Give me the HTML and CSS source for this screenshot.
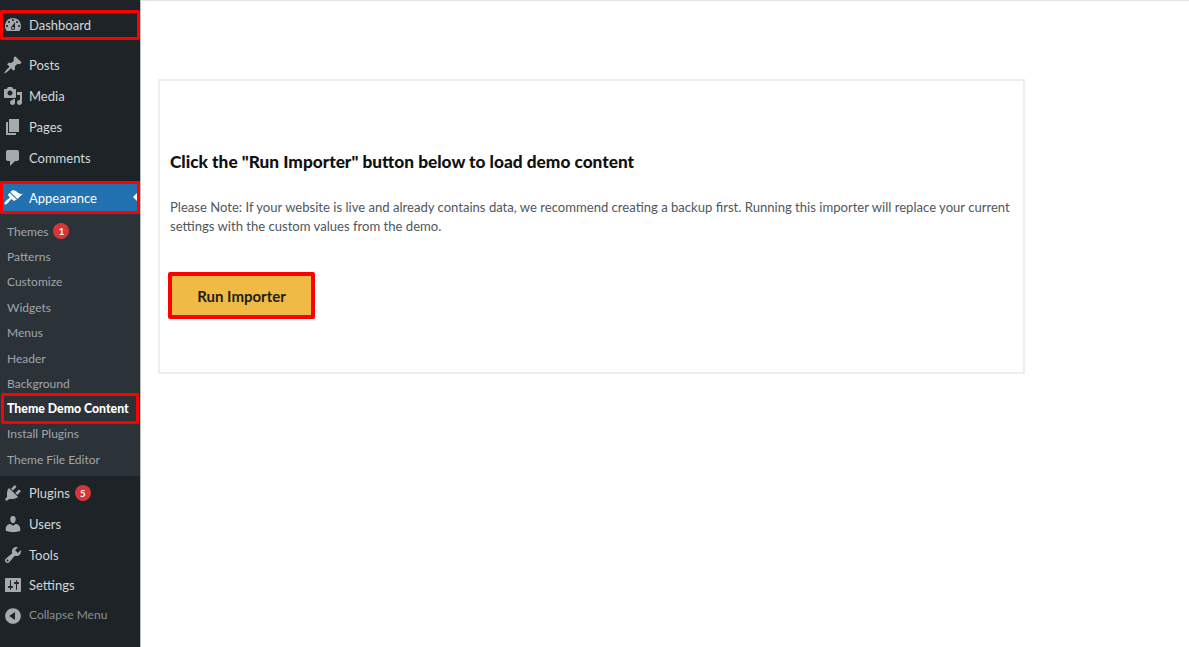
FILE: index.html
```html
<!DOCTYPE html>
<html lang="en">
<head>
<meta charset="utf-8">
<title>Theme Demo Content</title>
<link rel="stylesheet" href="styles.css">
</head>
<body>
<div class="layout">
  <nav class="sidebar">
    <a class="item item-dash marked"><svg class="icon" viewBox="0 0 20 20"><path fill-rule="evenodd" d="M3.76 16h12.48c1.1-1.37 1.76-3.11 1.76-5 0-4.42-3.58-8-8-8s-8 3.58-8 8c0 1.89.66 3.63 1.76 5zM10 4c.55 0 1 .45 1 1s-.45 1-1 1-1-.45-1-1 .45-1 1-1zM6 6c.55 0 1 .45 1 1s-.45 1-1 1-1-.45-1-1 .45-1 1-1zm8 0c.55 0 1 .45 1 1s-.45 1-1 1-1-.45-1-1 .45-1 1-1zm-5.37 5.55L12 7v6c0 1.1-.9 2-2 2s-2-.9-2-2c0-.57.24-1.08.63-1.45zM4 10c.55 0 1 .45 1 1s-.45 1-1 1-1-.45-1-1 .45-1 1-1zm12 0c.55 0 1 .45 1 1s-.45 1-1 1-1-.45-1-1 .45-1 1-1zm-5 3c0-.55-.45-1-1-1s-1 .45-1 1 .45 1 1 1 1-.45 1-1z"/></svg><span>Dashboard</span></a>
    <div class="group group-content">
      <a class="item"><svg class="icon" viewBox="0 0 20 20"><path d="M10.44 3.02l1.82-1.82 6.36 6.35-1.83 1.82c-1.05-.68-2.48-.57-3.41.36l-.75.75c-.92.93-1.04 2.35-.35 3.41l-1.83 1.82-2.41-2.41-2.8 2.79c-.42.42-3.38 2.71-3.8 2.29s1.86-3.39 2.28-3.81l2.79-2.79L4.1 9.36l1.83-1.82c1.05.69 2.48.57 3.4-.36l.75-.75c.93-.92 1.05-2.35.36-3.41z"/></svg><span>Posts</span></a>
      <a class="item"><svg class="icon" viewBox="0 0 20 20"><path fill-rule="evenodd" d="M13 11V4c0-.55-.45-1-1-1h-1.67L9 1H5L3.67 3H2c-.55 0-1 .45-1 1v7c0 .55.45 1 1 1h10c.55 0 1-.45 1-1zM7 4.5c1.38 0 2.5 1.12 2.5 2.5S8.38 9.5 7 9.5 4.5 8.38 4.5 7 5.62 4.5 7 4.5zM14 6h5v10.5c0 1.38-1.12 2.5-2.5 2.5S14 17.88 14 16.5s1.12-2.5 2.5-2.5c.17 0 .34.02.5.05V9h-3V6zm-4 8.05V13h2v3.5c0 1.38-1.12 2.5-2.5 2.5S7 17.88 7 16.5 8.12 14 9.5 14c.17 0 .34.02.5.05z"/></svg><span>Media</span></a>
      <a class="item"><svg class="icon" viewBox="0 0 20 20"><path d="M6 15V2h10v13H6zm-1 1h8v2H3V5h2v11z"/></svg><span>Pages</span></a>
      <a class="item"><svg class="icon" viewBox="0 0 20 20"><path d="M5 2h9c1.1 0 2 .9 2 2v7c0 1.1-.9 2-2 2h-2l-5 5v-5H5c-1.1 0-2-.9-2-2V4c0-1.1.9-2 2-2z"/></svg><span>Comments</span></a>
    </div>
    <a class="item item-current marked"><svg class="icon" viewBox="0 0 20 20"><path d="M14.48 11.06L7.41 3.99l1.5-1.5c.5-.56 2.3-.47 3.51.32 1.21.8 1.43 1.28 2.91 2.1 1.18.64 2.45 1.26 4.45.85zm-.71.71L6.7 4.77 5.25 6.2c-.39.39-.39 1.02 0 1.41l1.1 1.1c.39.39.39 1.03 0 1.42-.6.6-1.43 1.11-2.21 1.69-.35.26-.7.53-1.01.84-1.43 1.43-2.3 2.7-1.5 3.5s2.07-.07 3.5-1.5c.31-.31.58-.66.84-1.01.58-.78 1.09-1.61 1.69-2.21.39-.39 1.03-.39 1.42 0l1.1 1.1c.39.39 1.02.39 1.41 0z"/></svg><span>Appearance</span><i class="caret"></i></a>
    <div class="submenu">
      <a class="subitem">Themes <b class="badge badge-sub">1</b></a>
      <a class="subitem">Patterns</a>
      <a class="subitem">Customize</a>
      <a class="subitem">Widgets</a>
      <a class="subitem">Menus</a>
      <a class="subitem">Header</a>
      <a class="subitem">Background</a>
      <a class="subitem subitem-current marked">Theme Demo Content</a>
      <a class="subitem">Install Plugins</a>
      <a class="subitem">Theme File Editor</a>
    </div>
    <div class="group group-admin">
      <a class="item"><svg class="icon" viewBox="0 0 20 20"><path d="M13.11 4.36L9.87 7.6 8 5.73l3.24-3.24c.35-.34 1.05-.2 1.56.32.52.51.66 1.21.31 1.55zm-8 1.77l.91-1.12 9.01 9.01-1.19.84c-.71.71-2.63 1.16-3.82 1.16H6.14L4.9 17.26c-.59.59-1.54.59-2.12 0-.59-.58-.59-1.53 0-2.12l1.24-1.24v-3.88c0-1.13.4-3.19 1.09-3.89zm7.26 3.97l3.24-3.24c.34-.35 1.04-.21 1.55.31.52.51.66 1.21.31 1.55l-3.24 3.25z"/></svg><span>Plugins</span><b class="badge">5</b></a>
      <a class="item"><svg class="icon" viewBox="0 0 20 20"><path d="M10 9.25c-2.27 0-2.73-3.44-2.73-3.44C7 4.02 7.82 2 9.97 2c2.16 0 2.98 2.02 2.71 3.81 0 0-.41 3.44-2.68 3.44zm0 2.57L12.72 10c2.39 0 4.52 2.33 4.52 4.53v2.49s-3.65 1.13-7.24 1.13c-3.65 0-7.24-1.13-7.24-1.13v-2.49c0-2.25 1.94-4.48 4.47-4.48z"/></svg><span>Users</span></a>
      <a class="item"><svg class="icon" viewBox="0 0 20 20"><path fill-rule="evenodd" d="M16.68 9.77c-1.34 1.34-3.3 1.67-4.95.99l-5.41 6.52c-.99.99-2.59.99-3.58 0s-.99-2.59 0-3.57l6.52-5.42c-.68-1.65-.35-3.61.99-4.95 1.28-1.28 3.12-1.62 4.72-1.06l-2.89 2.89 2.82 2.82 2.86-2.87c.53 1.58.18 3.39-1.08 4.65zM3.81 16.21c.4.39 1.04.39 1.43 0 .4-.4.4-1.04 0-1.43-.39-.4-1.03-.4-1.43 0-.39.39-.39 1.03 0 1.43z"/></svg><span>Tools</span></a>
      <a class="item"><svg class="icon" viewBox="0 0 20 20"><path fill-rule="evenodd" d="M18 16V4c0-.55-.45-1-1-1H3c-.55 0-1 .45-1 1v12c0 .55.45 1 1 1h14c.55 0 1-.45 1-1zM8 11h1c.55 0 1 .45 1 1s-.45 1-1 1H8v1.5c0 .28-.22.5-.5.5s-.5-.22-.5-.5V13H6c-.55 0-1-.45-1-1s.45-1 1-1h1V5.5c0-.28.22-.5.5-.5s.5.22.5.5V11zm5-2h-1c-.55 0-1-.45-1-1s.45-1 1-1h1V5.5c0-.28.22-.5.5-.5s.5.22.5.5V7h1c.55 0 1 .45 1 1s-.45 1-1 1h-1v5.5c0 .28-.22.5-.5.5s-.5-.22-.5-.5V9z"/></svg><span>Settings</span></a>
      <a class="item item-collapse"><svg class="icon" viewBox="0 0 20 20"><path fill-rule="evenodd" d="M10 2.16c4.33 0 7.84 3.51 7.84 7.84s-3.51 7.84-7.84 7.84S2.16 14.33 2.16 10 5.71 2.16 10 2.16zm2 11.72V6.12L6.18 9.97z"/></svg><span>Collapse Menu</span></a>
    </div>
  </nav>
  <main class="main">
    <section class="card">
      <h2 class="title">Click the "Run Importer" button below to load demo content</h2>
      <p class="note">Please Note: If your website is live and already contains data, we recommend creating a backup first. Running this importer will replace your current settings with the custom values from the demo.</p>
      <div class="action"><button class="run" type="button">Run Importer</button></div>
    </section>
  </main>
</div>
</body>
</html>
```
FILE: styles.css
```css
* { box-sizing: border-box; }
html, body { margin: 0; height: 100%; }
body { font-family: "Lato", "Noto Sans", sans-serif; background: #fff; overflow: hidden; }
.layout { display: flex; height: 647px; }

.sidebar { width: 140px; flex: none; background: #1d2327; font-size: 13px; padding-top: 10px; box-shadow: 1px 0 0 #b9bcbf; position: relative; }
.item { display: flex; align-items: center; height: 31px; color: #d3d6d9; position: relative; }
.icon { width: 20px; height: 20px; margin: 0 6px 0 3px; flex: none; fill: #a7aaad; }
.item-dash { height: 30px; }
.group-content { margin-top: 9px; }
.item-current { height: 33px; margin-top: 8px; background: #2271b1; color: #fff; }
.item-current .icon { fill: #fff; }
.caret { position: absolute; right: 3px; top: 12px; border: 4px solid transparent; border-left-width: 0; border-right-color: #fff; }

.marked { outline: 3.5px solid #f00; outline-offset: -3px; border-radius: 2px; }

.submenu { background: #2c3338; height: 262px; padding: 4.4px 0 0; }
.subitem { display: flex; align-items: center; height: 25.4px; padding-left: 7px; font-size: 12px; color: #a0a5aa; white-space: nowrap; }
.subitem-current { height: 31px; margin: -3px 1px -3px 1px; padding-left: 6px; font-weight: 900; font-size: 12.3px; color: #fff; }

.badge { display: inline-flex; align-items: center; justify-content: center; width: 16px; height: 16px; margin-left: 5px; border-radius: 50%; background: #d63638; color: #fff; font-size: 9.5px; font-weight: 700; }

.group-admin { padding-top: 2px; }
.group-admin .item { height: 30.67px; }
.group-admin .item-collapse { color: #8c8f94; font-size: 12px; height: 27px; }
.item-collapse .icon { margin-top: 3px; }

.main { flex: 1; min-width: 0; padding: 79px 164px 0 18px; border-top: 1px solid #e4e4e4; }
.card { height: 295px; margin-top: -1px; border: 2px solid #eeeeee; padding: 71px 10px 0; }
.title { margin: 0; font-size: 17.25px; line-height: 20px; font-weight: 900; color: #111; }
.note { margin: 26px 0 0; font-size: 13.08px; line-height: 19px; color: #50575e; }
.action { margin-top: 36px; }
.run { display: block; width: 147px; height: 47px; margin-left: -2px; border: 4px solid #f00; border-radius: 2px; background: #f0bb44; color: #1d1d1d; font-family: inherit; font-size: 15px; font-weight: 700; padding: 0; }
```
